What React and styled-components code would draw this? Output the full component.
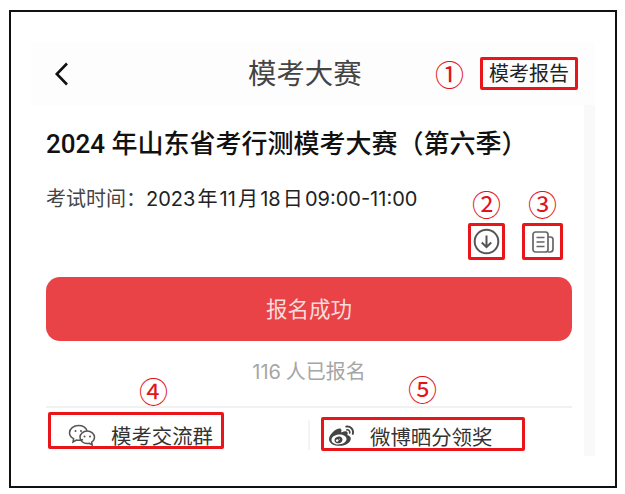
import React from "react";
import styled, {createGlobalStyle} from "styled-components";
import {FaWeibo} from "react-icons/fa";

const GlobalStyle = createGlobalStyle`
	body {
		margin: 0;
		background: #fff;
		font-family: Inter, "Noto Sans CJK SC", "Noto Sans", sans-serif;
		text-spacing-trim: space-all;
	}
`;

const Frame = styled.div`
	box-sizing: border-box;
	width: 608px;
	height: 478px;
	margin: 10px 0 0 9px;
	padding: 30px 20px 0 20px;
	border: 2px solid #111;
`;

const Nav = styled.div`
	display: flex;
	align-items: center;
	height: 63px;
	padding-right: 17px;
	background: #fdfdfd;
`;

const Back = styled.div`
	display: flex;
	width: 217px;
	padding-left: 23px;
	box-sizing: border-box;
`;

const NavTitle = styled.div`
	font-size: 28.4px;
	line-height: 40px;
	color: #444;
`;

const Mark = styled.div`
	font-family: "Noto Sans CJK SC", sans-serif;
	font-size: 29px;
	line-height: ${(p) => p.$line || 28}px;
	color: #e0141a;
	text-align: center;
`;

const NavMark = styled(Mark)`
	margin-left: auto;
	margin-right: 16px;
	margin-bottom: 2px;
`;

const ReportBox = styled.div`
	box-sizing: border-box;
	width: 98px;
	height: 33px;
	border: 3px solid #e8151b;
	border-radius: 2px;
	font-size: 20px;
	line-height: 29px;
	color: #222;
	text-align: center;
`;

const Sheet = styled.div`
	padding: 22px 12px 5px 15px;
	border-right: 11px solid #f9f9f9;
`;

const Title = styled.h1`
	margin: 0;
	font-family: Roboto, "Noto Sans CJK SC", sans-serif;
	font-size: 26px;
	line-height: 34px;
	font-weight: 500;
	color: #111;
	white-space: nowrap;
`;

const MetaRow = styled.div`
	display: flex;
	justify-content: space-between;
	align-items: flex-start;
	margin-top: 25px;
	padding-right: 9px;
`;

const TimeText = styled.div`
	font-size: 20px;
	line-height: 26px;
	word-spacing: -3.5px;
	color: #222;
	white-space: nowrap;
`;

const TimeLabel = styled.span`
	color: #444;
`;

const ToolGroup = styled.div`
	display: flex;
	gap: 17px;
`;

const ToolColumn = styled.div`
	display: flex;
	flex-direction: column;
	align-items: center;
`;

const ToolBox = styled.div`
	box-sizing: border-box;
	display: flex;
	align-items: center;
	justify-content: center;
	width: ${(p) => p.$width}px;
	height: 37px;
	border: 3px solid #e8151b;
	border-radius: 2px;
	margin-top: 3px;
`;

const BigButton = styled.div`
	height: 64px;
	margin-top: 17px;
	border-radius: 14px;
	background: #e94348;
	color: #f9dcdc;
	font-size: 21.5px;
	line-height: 64px;
	text-align: center;
`;

const SignedCount = styled.div`
	margin-top: 24px;
	height: 14px;
	font-size: 20px;
	line-height: 14px;
	word-spacing: -1px;
	color: #a6a6a6;
	text-align: center;
`;

const MarkRow = styled.div`
	display: flex;
	align-items: flex-start;
	gap: 241px;
	height: 27px;
	padding-left: 93px;
	border-bottom: 2px solid #f1f1f1;
`;

const FootMark = styled(Mark)`
	width: 28px;
	margin-top: ${(p) => p.$top}px;
`;

const LinkRow = styled.div`
	display: flex;
	align-items: flex-start;
	padding-top: 4px;
`;

const LinkBox = styled.div`
	box-sizing: border-box;
	display: flex;
	align-items: center;
	gap: ${(p) => p.$gap}px;
	width: ${(p) => p.$width}px;
	height: ${(p) => p.$height}px;
	margin-left: ${(p) => p.$left}px;
	margin-top: ${(p) => p.$top}px;
	padding: ${(p) => p.$lower}px 0 0 ${(p) => p.$pad}px;
	border: 3px solid #e8151b;
	border-radius: 2px;
	font-size: 20.4px;
	color: #333;
	white-space: nowrap;
`;

const VLine = styled.div`
	width: 2px;
	height: 30px;
	margin: 8px 0 0 84px;
	background: #f4f4f4;
`;

const ChevronIcon = () => (
	<svg width="16" height="26" viewBox="0 0 16 26" fill="none">
		<path d="M13 2.5 2.8 13 13 23.5" stroke="#111" strokeWidth="2.6" />
	</svg>
);

const DownloadIcon = () => (
	<svg width="27" height="27" viewBox="0 0 27 27" fill="none" stroke="#555" strokeWidth="2">
		<circle cx="13.5" cy="13.5" r="11.8" />
		<path d="M13.5 7.5v11.5M8.8 14.5l4.7 4.7 4.7-4.7" />
	</svg>
);

const PaperIcon = () => (
	<svg width="24" height="24" viewBox="0 0 24 24" fill="none" stroke="#666" strokeWidth="1.7">
		<rect x="2" y="2" width="15" height="20" rx="2.5" />
		<path d="M17 7h2.5A2.5 2.5 0 0 1 22 9.5V19a3 3 0 0 1-3 3h-2M5.5 7.5h8M5.5 12h8M5.5 16.5h8" />
	</svg>
);

const ChatIcon = () => (
	<svg width="28" height="22" viewBox="0 0 28 22" fill="none" stroke="#555" strokeWidth="1.5">
		<path d="M15 15.5c-1 .5-2.4.8-4 .8-1 0-1.8-.1-2.6-.3L5 18l.6-3.4C3 13.200 1.500 11 1.500 8.700 1.500 4.700 5.700 1.500 10.500 1.500c4 0 7.500 2.200 8.600 5.200" />
		<path d="M26.500 13.300c0-3.500-3.400-6.300-7.300-6.300-4 0-7.200 2.800-7.200 6.300s3.200 6.300 7.200 6.300c.8 0 1.500-.1 2.200-.3l2.800 1.700-.5-2.900c1.700-1.100 2.800-2.900 2.800-4.800z" />
		<circle cx="7.500" cy="7" r="1" fill="#555" stroke="none" />
		<circle cx="13" cy="7" r="1" fill="#555" stroke="none" />
		<circle cx="16.500" cy="12.500" r="1" fill="#555" stroke="none" />
		<circle cx="22" cy="12.500" r="1" fill="#555" stroke="none" />
	</svg>
);

export default function App() {
	return (
		<>
			<GlobalStyle />
			<Frame>
				<Nav>
					<Back>
						<ChevronIcon />
					</Back>
					<NavTitle>模考大赛</NavTitle>
					<NavMark>①</NavMark>
					<ReportBox>模考报告</ReportBox>
				</Nav>
				<Sheet>
					<Title>2024 年山东省考行测模考大赛（第六季）</Title>
					<MetaRow>
						<TimeText>
							<TimeLabel>考试时间：</TimeLabel>2023 年 11 月 18 日 09:00-11:00
						</TimeText>
						<ToolGroup>
							<ToolColumn>
								<Mark $line={34}>②</Mark>
								<ToolBox $width={37}>
									<DownloadIcon />
								</ToolBox>
							</ToolColumn>
							<ToolColumn>
								<Mark $line={34}>③</Mark>
								<ToolBox $width={41}>
									<PaperIcon />
								</ToolBox>
							</ToolColumn>
						</ToolGroup>
					</MetaRow>
					<BigButton>报名成功</BigButton>
					<SignedCount>116 人已报名</SignedCount>
					<MarkRow>
						<FootMark $top={-3}>④</FootMark>
						<FootMark $top={-5}>⑤</FootMark>
					</MarkRow>
					<LinkRow>
						<LinkBox $width={176} $height={37} $left={2} $top={0} $pad={17} $gap={15} $lower={8}>
							<ChatIcon />
							模考交流群
						</LinkBox>
						<VLine />
						<LinkBox $width={204} $height={34} $left={11} $top={5} $pad={5} $gap={16} $lower={4}>
							<FaWeibo size={25} color="#444" />
							微博晒分领奖
						</LinkBox>
					</LinkRow>
				</Sheet>
			</Frame>
		</>
	);
}
